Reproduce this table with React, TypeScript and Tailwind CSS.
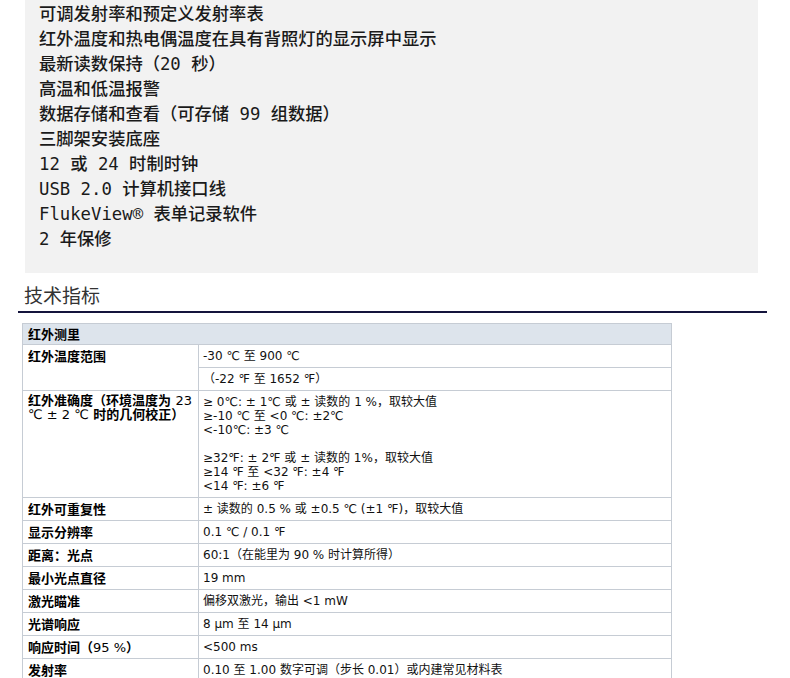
const features = [
  '可调发射率和预定义发射率表',
  '红外温度和热电偶温度在具有背照灯的显示屏中显示',
  '最新读数保持（20 秒）',
  '高温和低温报警',
  '数据存储和查看（可存储 99 组数据）',
  '三脚架安装底座',
  '12 或 24 时制时钟',
  'USB 2.0 计算机接口线',
  'FlukeView® 表单记录软件',
  '2 年保修',
];

const simpleRows: { label: React.ReactNode; value: string }[] = [
  { label: '红外可重复性', value: '± 读数的 0.5 % 或 ±0.5 ℃ (±1 ℉)，取较大值' },
  { label: '显示分辨率', value: '0.1 ℃ / 0.1 ℉' },
  { label: '距离：光点', value: '60:1（在能里为 90 % 时计算所得）' },
  { label: '最小光点直径', value: '19 mm' },
  { label: '激光瞄准', value: '偏移双激光，输出 <1 mW' },
  { label: '光谱响应', value: '8 μm 至 14 μm' },
  {
    label: (
      <>
        响应时间（<span className="font-normal">95 %</span>）
      </>
    ),
    value: '<500 ms',
  },
  { label: '发射率', value: '0.10 至 1.00 数字可调（步长 0.01）或内建常见材料表' },
];

const accuracyLines = [
  '≥ 0℃: ± 1℃ 或 ± 读数的 1 %，取较大值',
  '≥-10 ℃ 至 <0 ℃: ±2℃',
  '<-10℃: ±3 ℃',
  '',
  '≥32℉: ± 2℉ 或 ± 读数的 1%，取较大值',
  '≥14 ℉ 至 <32 ℉: ±4 ℉',
  '<14 ℉: ±6 ℉',
];

const labelCell =
  'w-[176px] border border-[#c6ccd4] pl-[5px] pr-[3px] pt-[4px] pb-[3px] align-top text-[13px] font-bold leading-[15px] text-black';
const valueCell =
  'border border-[#c6ccd4] pl-[4px] pr-[3px] pt-[4px] pb-[3px] align-top text-[12px] leading-[15px] text-[#111]';

export default function App() {
  return (
    <div className="min-h-[678px] w-[790px] overflow-hidden bg-white font-['DejaVu_Sans','Noto_Sans_CJK_SC',sans-serif]">
      {/* feature list */}
      <div className="ml-[25px] w-[733px] bg-[#f2f2f2] pl-[14px] pt-[2px] pb-[21px] font-['DejaVu_Sans_Mono','Noto_Sans_CJK_SC',monospace] text-[17.3px] font-medium leading-[25px] text-[#1a1a1a]">
        {features.map(f => (
          <div key={f} className="whitespace-pre">
            {f}
          </div>
        ))}
      </div>

      <h2 className="ml-[24px] mt-[9px] font-['Noto_Sans_CJK_SC',sans-serif] text-[19px] font-normal leading-[26px] text-[#333]">
        技术指标
      </h2>
      <div className="ml-[18px] mt-[3px] h-[2px] w-[749px] bg-[#14143c]" />

      <table className="ml-[22px] mt-[10px] w-[650px] border-collapse">
        <tbody>
          <tr>
            <td
              colSpan={2}
              className="border border-[#c6ccd4] bg-[#dde4ec] pl-[5px] pt-[3px] pb-[2px] text-[13px] font-bold leading-[15px] text-black"
            >
              红外测里
            </td>
          </tr>
          <tr>
            <td rowSpan={2} className={labelCell}>
              红外温度范围
            </td>
            <td className={valueCell}>-30 ℃ 至 900 ℃</td>
          </tr>
          <tr>
            <td className={valueCell}>（-22 ℉ 至 1652 ℉）</td>
          </tr>
          <tr>
            <td className={`${labelCell} !pt-[3px] !leading-[14px]`}>
              红外准确度（环境温度为 <span className="font-normal">23</span>
              <br />
              <span className="font-normal">℃ ± 2 ℃</span> 时的几何校正）
            </td>
            <td className={`${valueCell} !pb-[4px] !leading-[14px]`}>
              {accuracyLines.map((l, i) => (
                <div key={i} className="h-[14px] whitespace-pre">
                  {l}
                </div>
              ))}
            </td>
          </tr>
          {simpleRows.map((r, i) => (
            <tr key={i}>
              <td className={labelCell}>{r.label}</td>
              <td className={valueCell}>{r.value}</td>
            </tr>
          ))}
        </tbody>
      </table>
    </div>
  );
}
